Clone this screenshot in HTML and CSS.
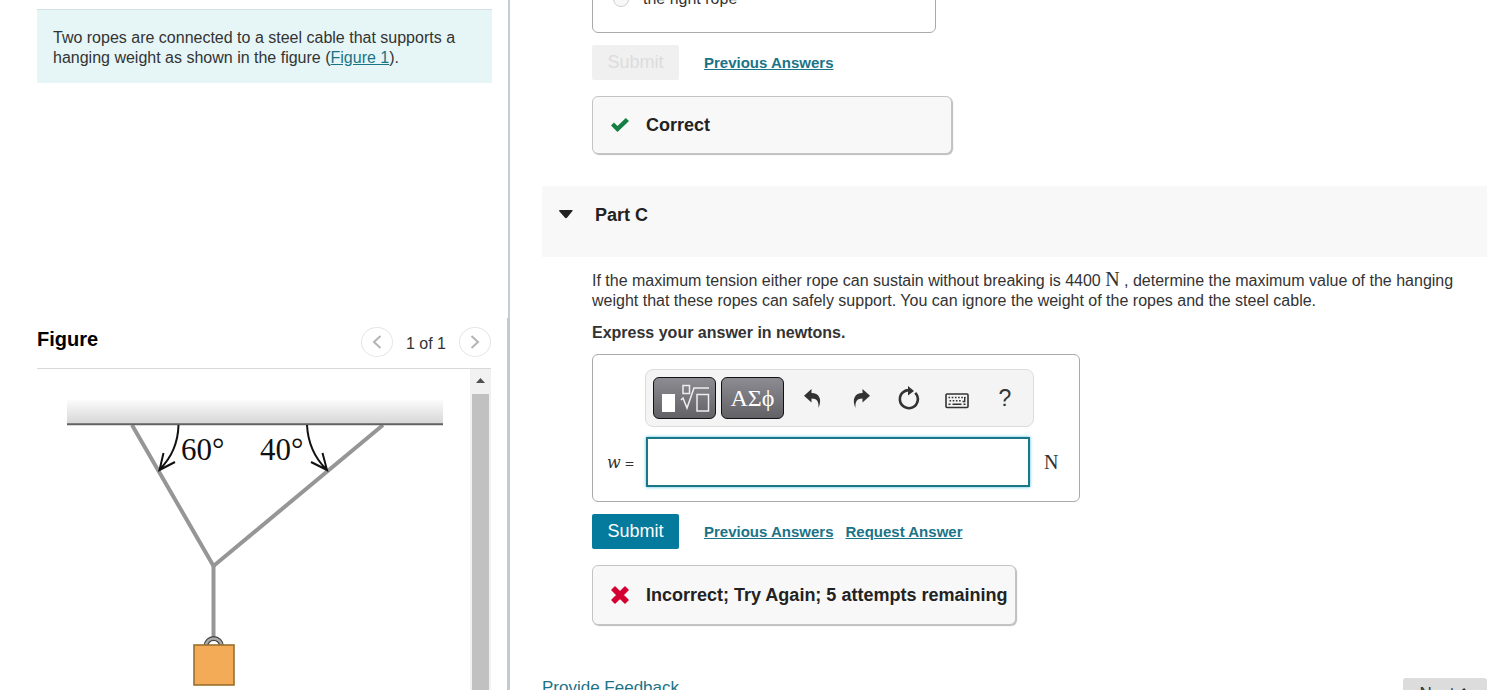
FILE: index.html
```html
<!DOCTYPE html>
<html lang="en">
<head>
<meta charset="utf-8">
<title>Ropes and hanging weight</title>
<link rel="stylesheet" href="styles.css">
</head>
<body>
<div class="page">
  <aside class="side">
    <section class="intro">
      <p class="intro-text">Two ropes are connected to a steel cable that supports a hanging weight as shown in the figure (<a href="#figure">Figure 1</a>).</p>
    </section>
    <section class="figure" id="figure">
      <header class="figure-head">
        <h2 class="figure-title">Figure</h2>
        <nav class="pager">
          <button class="round" type="button" aria-label="Previous figure"><svg width="10" height="14" viewBox="0 0 10 14"><path d="M8.500 1L2 7l6.500 6" fill="none" stroke="#b4b4b4" stroke-width="2"/></svg></button>
          <span class="pager-text">1 of 1</span>
          <button class="round" type="button" aria-label="Next figure"><svg width="10" height="14" viewBox="0 0 10 14"><path d="M1.500 1L8 7l-6.500 6" fill="none" stroke="#b4b4b4" stroke-width="2"/></svg></button>
        </nav>
      </header>
      <div class="figure-body">
        <svg class="diagram" width="376" height="290" viewBox="67 400 376 290" role="img" aria-label="Two ropes at 60 and 40 degrees holding a weight">
          <defs>
            <linearGradient id="ceiling" x1="0" y1="0" x2="0" y2="1"><stop offset="0" stop-color="#fbfbfb"/><stop offset="1" stop-color="#d6d6d6"/></linearGradient>
          </defs>
          <rect x="67" y="400" width="376" height="24" fill="url(#ceiling)"/>
          <g fill="none" stroke="#969696" stroke-width="4">
            <path d="M132 425L213.500 566L383 425" stroke-linejoin="bevel"/>
            <path d="M213.500 564V638"/>
          </g>
          <path d="M67 424.300H443" stroke="#626262" stroke-width="2"/>
          <g fill="none" stroke="#111" stroke-width="2">
            <path d="M178.500 425C178 444 172 457 160 469M163.500 453L159.500 470L175 462"/>
            <path d="M307 425C308 444 314 457 326 469M311 462L327 470L322.500 453"/>
          </g>
          <text class="angle" x="181" y="460">60°</text>
          <text class="angle" x="260" y="460">40°</text>
          <path d="M206 646a7.700 7.500 0 0 1 15.400 0" fill="none" stroke="#444" stroke-width="5"/>
          <path d="M206 646a7.700 7.500 0 0 1 15.400 0" fill="none" stroke="#aaa" stroke-width="2.500"/>
          <rect x="194" y="645" width="40" height="40" fill="#f4ab57" stroke="#99702f" stroke-width="1.600"/>
        </svg>
        <div class="track"><svg class="track-arrow" width="9" height="5" viewBox="0 0 9 5"><path d="M0 5L4.500 0L9 5Z" fill="#505050"/></svg><div class="thumb"></div></div>
      </div>
    </section>
  </aside>

  <main class="work">
    <div class="inner">
      <div class="choices"><label class="choice"><input type="radio" name="rope" disabled>the right rope</label></div>
      <div class="actions">
        <button class="submit" type="button" disabled>Submit</button>
        <a class="action-link" href="#previous-b">Previous Answers</a>
      </div>
      <div class="feedback correct">
        <svg width="18" height="14" viewBox="0 0 18 14"><path d="M0 7.500L3 4.500L6.500 8L14.800 0L18 3L6.500 14Z" fill="#157f43"/></svg>
        <span>Correct</span>
      </div>
    </div>
    <header class="part">
      <svg width="14" height="9" viewBox="0 0 14 9"><path d="M0 1Q0 0 1 0H13Q14 0 13.500 1L8.200 7.500Q7 9 5.800 7.500L.5 1.500Z" fill="#222"/></svg>
      <h2 class="part-title">Part C</h2>
    </header>
    <div class="inner">
      <p class="question">If the maximum tension either rope can sustain without breaking is 4400 <span class="unit">N</span> , determine the maximum value of the hanging weight that these ropes can safely support. You can ignore the weight of the ropes and the steel cable.</p>
      <p class="hint">Express your answer in newtons.</p>
      <div class="answer">
        <div class="toolbar">
          <button class="dark" type="button" aria-label="Templates"><svg width="50" height="30" viewBox="0 0 50 30"><rect x="2" y="11" width="13" height="18" fill="#fff"/><g fill="none" stroke="#eee" stroke-width="1.500"><rect x="23" y="2.500" width="6.500" height="8"/><path d="M21 17l2-2l4 10L34 5H49"/><rect x="37" y="11.500" width="11.500" height="16.500"/></g></svg></button>
          <button class="dark greek" type="button">ΑΣϕ</button>
          <button class="tool" type="button" aria-label="Undo"><svg width="18" height="19" viewBox="0 0 18 19"><path d="M7.500 0V4C15 4 18.500 10 14.500 19C15 12.500 13 9.500 7.500 9.500V13.500L0 6.800Z" fill="#333"/></svg></button>
          <button class="tool" type="button" aria-label="Redo"><svg width="18" height="19" viewBox="0 0 18 19"><path d="M10.500 0V4C3 4-.5 10 3.500 19C3 12.500 5 9.500 10.500 9.500V13.500L18 6.800Z" fill="#333"/></svg></button>
          <button class="tool" type="button" aria-label="Reset"><svg width="22" height="24" viewBox="0 0 22 24"><path d="M15.500 5.500A9 9 0 1 1 11 4.200" transform="rotate(14 11 13.200)" fill="none" stroke="#333" stroke-width="2.600"/><path d="M10 0L16 5L10 9.500Z" fill="#333"/></svg></button>
          <button class="tool" type="button" aria-label="Keyboard"><svg class="keyboard" width="24" height="16" viewBox="0 0 24 16"><rect x="1" y="1" width="22" height="13.500" rx="1" fill="none" stroke="#333" stroke-width="1.600"/><path d="M3.500 4.500H20.500M4.500 7.800H17" stroke="#333" stroke-width="1.500" stroke-dasharray="1.600 1.600"/><path d="M19.700 4V8.500H17.500M3.500 11.300H5.500M7.500 11.300H16.500M18.500 11.300H20.500" fill="none" stroke="#333" stroke-width="1.400"/></svg></button>
          <button class="tool help" type="button" aria-label="Help">?</button>
        </div>
        <label class="var" for="w"><i class="var-name">w</i> =</label>
        <input class="field" id="w" type="text">
        <span class="unit suffix">N</span>
      </div>
      <div class="actions">
        <button class="submit" type="button">Submit</button>
        <a class="action-link" href="#previous-c">Previous Answers</a>
        <a class="action-link" href="#request">Request Answer</a>
      </div>
      <div class="feedback wrong">
        <svg width="18" height="18" viewBox="0 0 18 18"><path d="M4 1L9 6L14 1L17 4L12 9L17 14L14 17L9 12L4 17L1 14L6 9L1 4Z" fill="#d50032" stroke="#d50032" stroke-linejoin="round" stroke-width="1.500"/></svg>
        <span>Incorrect; Try Again; 5 attempts remaining</span>
      </div>
    </div>
    <footer class="foot">
      <a class="provide" href="#feedback">Provide Feedback</a>
      <button class="next" type="button">Next <svg width="9" height="13" viewBox="0 0 9 13"><path d="M2 1L7 6.500L2 12" fill="none" stroke="#333" stroke-width="3"/></svg></button>
    </footer>
  </main>
</div>
</body>
</html>
```
FILE: styles.css
```css
* { box-sizing: border-box; }
body {
  margin: 0;
  font: 16px/20px "Liberation Sans", Arial, sans-serif;
  color: #333;
  background: #fff;
}
h2, p { margin: 0; }
button { font-family: inherit; border: 0; padding: 0; }
svg { display: block; flex: none; overflow: visible; }
a { color: #1b7388; }

.page {
  display: grid;
  grid-template-columns: 510fr 986fr;
  height: 100vh;
  overflow: hidden;
}

.side {
  display: grid;
  grid-template-rows: 318px 1fr;
  min-height: 0;
}
.intro {
  padding: 9px 16px 0 37px;
  border-right: 2px solid #c6ccd2;
}
.intro-text {
  padding: 18px 16px 15px;
  border-top: 1px solid #d3dfe4;
  background: #e6f6f7;
}
.figure {
  display: flex;
  flex-direction: column;
  min-height: 0;
  padding: 0 16px 0 37px;
  border-right: 3px solid #c0cbd3;
}
.figure-head {
  display: flex;
  justify-content: space-between;
  align-items: center;
  height: 51px;
  flex: none;
  border-bottom: 1px solid #d6d9d9;
}
.figure-title { font-size: 20px; line-height: 24px; color: #000; padding-bottom: 8px; }
.pager { display: flex; align-items: center; gap: 13px; padding-bottom: 2px; }
.pager-text { padding-top: 4px; }
.round {
  display: grid;
  place-items: center;
  width: 32px;
  height: 30px;
  border: 1px solid #e6e6e6;
  border-radius: 50%;
  background: #fff;
}
.figure-body {
  display: flex;
  justify-content: space-between;
  flex: 1;
  min-height: 0;
  overflow: hidden;
  padding-left: 30px;
}
.diagram { margin-top: 31px; }
.angle { font: 31px "Liberation Serif", serif; fill: #111; }
.track {
  display: flex;
  flex-direction: column;
  width: 21px;
  padding: 9px 2px 0;
  gap: 11px;
  background: #f1f1f1;
}
.track-arrow { align-self: center; }
.thumb { flex: 1; background: #c1c1c1; }

.work { padding: 0 9px 0 32px; min-width: 0; }
.inner { padding-left: 50px; }
.choices {
  width: 344px;
  height: 73px;
  margin-top: -40px;
  padding: 28px 20px;
  border: 1px solid #aaa;
  border-radius: 6px;
}
.choice { display: flex; align-items: center; gap: 14px; }
.choice input { margin: 0; width: 16px; height: 16px; }
.actions { display: flex; align-items: center; gap: 12px; margin: 12px 0 16px; }
.submit {
  width: 87px;
  height: 35px;
  margin-right: 13px;
  border-radius: 2px;
  font-size: 18px;
  color: #fff;
  background: #047a9c;
}
.submit:disabled { color: #dcdcdc; background: #f0f0f0; }
.action-link { font-size: 15px; font-weight: bold; }
.feedback {
  display: flex;
  align-items: center;
  width: fit-content;
  height: 58px;
  padding: 0 18px;
  gap: 17px;
  border: 1px solid #c4c4c4;
  border-radius: 6px;
  box-shadow: 1px 1px 1px #bbb;
  background: #f8f8f8;
  font-size: 18px;
  font-weight: bold;
  color: #222;
}
.correct { width: 360px; }

.part {
  display: flex;
  gap: 22px;
  height: 71px;
  margin-top: 32px;
  padding: 19px 17px;
  background: #f8f8f8;
}
.part svg { margin-top: 5px; }
.part-title { font-size: 18px; line-height: 20px; color: #222; }
.question { padding-top: 14px; }
.unit { font: 20px/16px "Liberation Serif", serif; }
.hint { margin: 12px 0 11px; font-weight: bold; }
.answer {
  display: grid;
  grid-template-columns: 38px 389px auto;
  align-items: center;
  width: 488px;
  padding: 14px;
  border: 1px solid #aaa;
  border-radius: 6px;
}
.toolbar {
  grid-column: 2;
  display: flex;
  align-items: center;
  height: 58px;
  margin-bottom: 10px;
  padding-left: 7px;
  border: 1px solid #dcdcdc;
  border-radius: 8px;
  background: #f4f4f4;
}
.dark {
  display: grid;
  place-items: center;
  width: 63px;
  height: 42px;
  margin-right: 5px;
  border: 1px solid #111;
  border-radius: 6px;
  color: #fff;
  background: linear-gradient(#8d8c92, #626166);
}
.greek { font: 24px "Liberation Serif", "DejaVu Serif", serif; }
.tool {
  display: grid;
  place-items: center;
  flex: 0 0 48px;
  height: 42px;
  background: none;
  color: #333;
}
.help { font-size: 23px; }
.keyboard { margin-top: 5px; }
.var { grid-column: 1; font: 12px "DejaVu Serif", serif; }
.var-name { font-size: 16px; }
.field {
  width: 384px;
  height: 50px;
  margin-left: 1px;
  padding: 0 12px;
  border: 2px solid #1b7688;
  box-shadow: 0 0 3px #47c0dc;
  outline: 0;
  font: 20px "Liberation Serif", serif;
}
.suffix { padding-left: 10px; }
.wrong { height: 60px; padding-right: 8px; }
.foot {
  display: flex;
  justify-content: space-between;
  align-items: flex-start;
  margin-top: 53px;
}
.provide { font-size: 17px; text-decoration: none; }
.next {
  display: flex;
  justify-content: center;
  align-items: center;
  gap: 7px;
  width: 84px;
  height: 32px;
  border-radius: 3px;
  background: #dcdcdc;
  color: #333;
  font-size: 17px;
}
```
